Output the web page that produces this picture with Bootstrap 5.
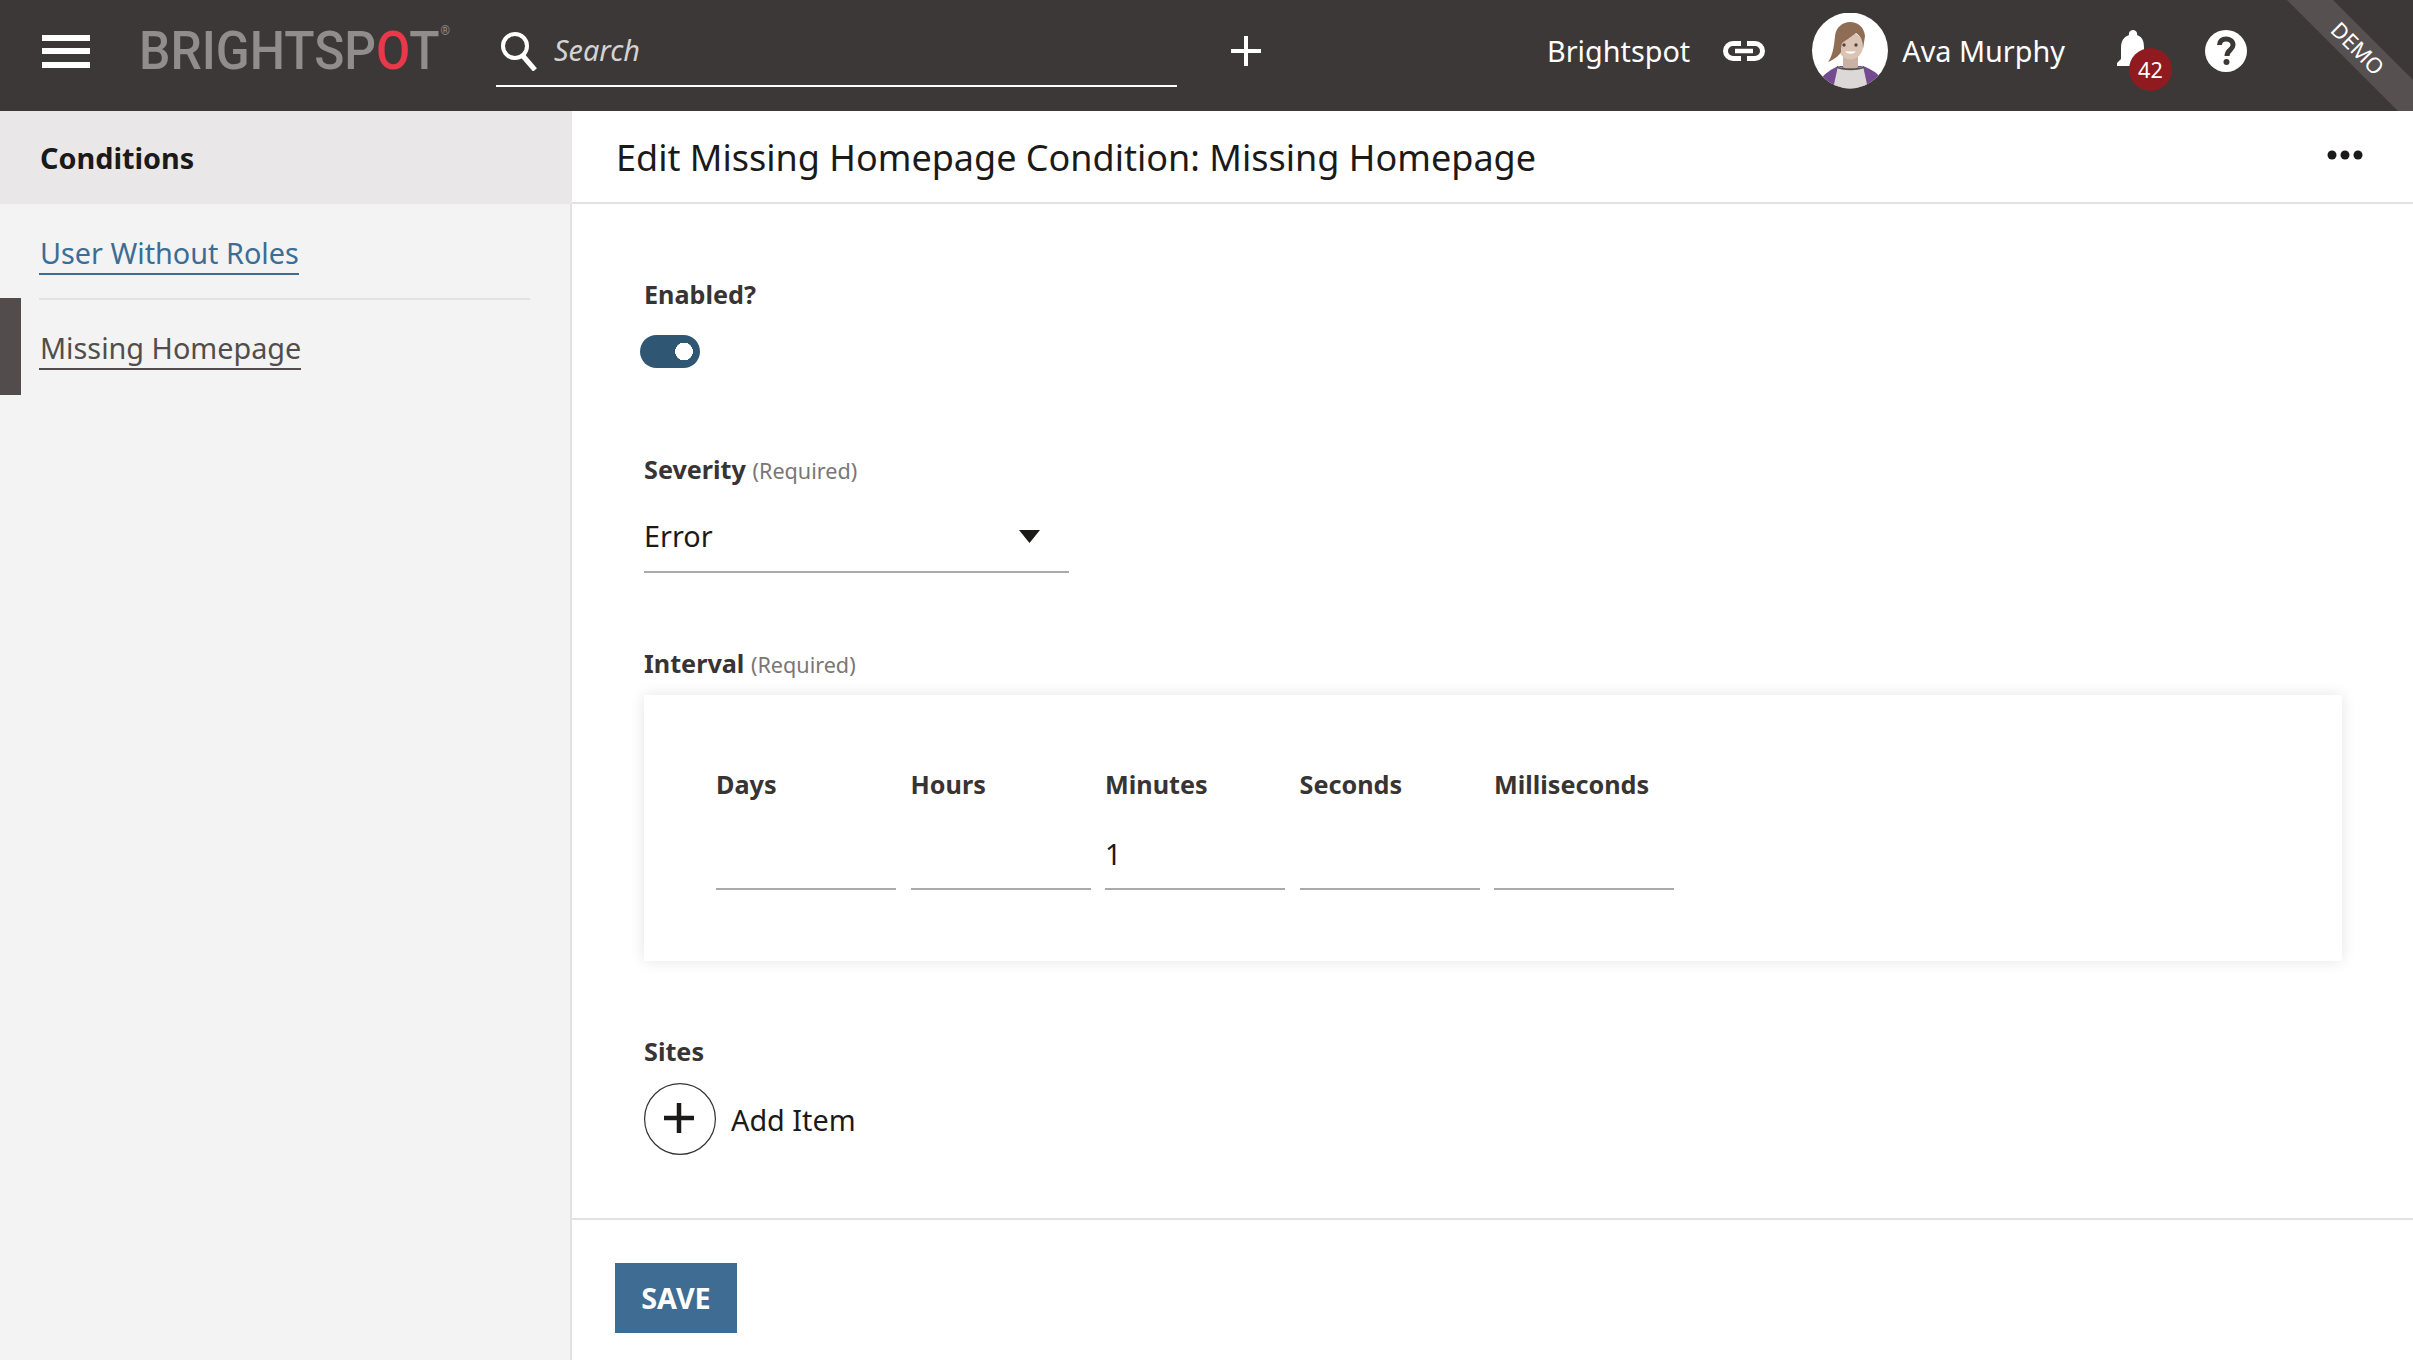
<!DOCTYPE html>
<html lang="en">
<head>
<meta charset="utf-8">
<title>Edit Missing Homepage Condition</title>
<link rel="stylesheet" href="https://cdn.jsdelivr.net/npm/bootstrap@5.3.0/dist/css/bootstrap.min.css">
<style>
html,body{height:100%;overflow:hidden}
body{font-family:"Noto Sans","Open Sans",sans-serif;font-size:28.8px;color:#1c1a19;background:#fff}
.bs-head{height:111px;background:#3c3837;color:#fff;position:relative;overflow:hidden;padding:0 0 9px 42px}
.bs-burger{width:48px;height:33px;display:flex;flex-direction:column;justify-content:space-between;margin-right:52px;flex:none}
.bs-burger i{display:block;height:6px;background:#fff}
.bs-logo{width:302px;flex:none;margin-right:55px;margin-left:-3px;padding-right:3px;font-family:Roboto,"Liberation Sans",sans-serif;font-weight:500;font-size:53.500px;line-height:1;color:#918d8c;white-space:nowrap}
.bs-logo-in{display:inline-block;transform:scaleX(.93);transform-origin:0 50%}
.bs-logo-in b{font-weight:500;color:#e8394a}
.bs-logo-in sup{font-size:13px;font-weight:400;top:-2.600em;vertical-align:baseline;margin-left:1px}
.bs-search{width:681px;height:87px;border-bottom:2px solid #fff;align-self:flex-start;padding:16px 0 0 4px;gap:16px;flex:none}
.bs-search span{font-style:italic;color:#d5d3d2;font-size:28.8px;line-height:1}
.bs-plus{margin-left:53px;width:32px;height:32px;flex:none}
.bs-space{margin-left:285px;line-height:1}
.bs-link{width:42px;height:20px;margin-left:33px;flex:none}
.bs-avatar{width:76px;height:76px;margin-left:47px;margin-right:14px;flex:none}
.bs-name{line-height:1}
.bs-bell{position:relative;width:46px;height:62px;margin-left:50px;flex:none;align-self:flex-start;margin-top:30px}
.bs-bell svg{width:32px;height:37px;display:block;margin-left:2px}
.bs-count{position:absolute;left:14px;top:18px;width:43px;height:43px;border-radius:50%;background:#8f1b20;color:#fff;font-size:21.600px;line-height:43px;text-align:center}
.bs-help{width:42px;height:42px;margin-left:44px;flex:none}
.bs-ribbon{position:absolute;right:0;top:0;width:126px;height:111px}
.bs-ribbon text{font-size:21.600px;fill:#fff;font-family:"Noto Sans",sans-serif}
.bs-shell{height:1249px}
.bs-side{width:572px;flex:none;background:#f3f3f3;border-right:2px solid #e2e2e2}
.bs-side-title{height:93px;background:#e9e7e8;padding-left:40px;font-weight:700;line-height:94px;margin-right:-2px}
.bs-side-item{position:relative;padding:0 40px 0 39px}
.bs-side-item a{display:inline-block;line-height:40px;text-decoration:none;border-bottom:2px solid currentColor;padding-left:1px}
.bs-item-one div{height:96px;border-bottom:2px solid #e2e2e2;padding-top:27px}
.bs-item-one a{color:#3d6d94}
.bs-item-two{padding-top:26px}
.bs-item-two a{color:#524d4c}
.bs-active{position:absolute;left:0;top:-2px;width:21px;height:97px;background:#524d4c}
.bs-title-row{height:93px;border-bottom:2px solid #e2e2e2;padding:2px 50px 0 44px}
.bs-title{font-size:36px;font-weight:400;margin:0;line-height:1;color:#1c1a19}
.bs-dots{width:36px;height:10px;margin-top:-5px}
.bs-form{padding-left:72px;padding-right:71px}
.bs-label{display:block;font-size:25.200px;font-weight:700;line-height:36px;color:#383433;margin:0}
.bs-label small{font-size:21.600px;font-weight:400;color:#7a7675;line-height:1}
.bs-enabled{margin-top:72px}
.form-switch .bs-toggle,.form-switch .bs-toggle:checked,.form-switch .bs-toggle:focus{display:block;width:60px;height:33px;margin:23px 0 0 -4px;float:none;border:0;border-radius:17px;background-color:#2f5673;background-image:radial-gradient(ellipse 9px 9px at 44px 50%,#fff 97%,transparent 100%);background-position:0 0;background-size:auto;box-shadow:none}
.bs-severity{margin-top:83px}
.bs-select,.bs-select:focus{width:425px;height:68px;margin-top:18px;padding:0 60px 4px 0;border:0;border-bottom:2px solid #aaa;border-radius:0;background-color:transparent;background-image:url("data:image/svg+xml,%3Csvg xmlns='http://www.w3.org/2000/svg' viewBox='0 0 21 13'%3E%3Cpath fill='%231c1a19' d='M0 0h21L10.500 13z'/%3E%3C/svg%3E");background-position:375px 25px;background-size:21px 13px;font-size:28.8px;color:#1c1a19;box-shadow:none}
.bs-interval{margin-top:72px}
.bs-panel{margin-top:14px;height:266px;padding:71px 0 0 72px;border:0;border-radius:0;box-shadow:0 0 14px rgba(0,0,0,.11)}
.bs-cols{gap:14.500px}
.bs-cols>div{width:180px}
.bs-num,.bs-num:focus{height:70px;margin-top:18px;padding:0 0 2px;border:0;border-bottom:2px solid #aaa;border-radius:0;background:transparent;font-size:28.8px;color:#1c1a19;box-shadow:none}
.bs-sites{margin-top:72px}
.bs-add{margin-top:14px;gap:15px}
.bs-circle{width:72px;height:72px;flex:none}
.bs-add span{line-height:1;padding-top:2px}
.bs-foot{margin-top:63px;border-top:2px solid #e2e2e2;padding:43px 0 0 43px}
.bs-save,.bs-save:hover{width:122px;height:70px;padding:0;background:#3e6c92;color:#fff;border:0;border-radius:0;font-size:28.8px;font-weight:700;line-height:70px}
</style>
</head>
<body>
<header class="bs-head d-flex align-items-center">
  <div class="bs-burger"><i></i><i></i><i></i></div>
  <div class="bs-logo"><span class="bs-logo-in">BRIGHTSP<b>O</b>T<sup>®</sup></span></div>
  <div class="bs-search d-flex align-items-center">
    <svg width="38" height="40" viewBox="0 0 38 40" fill="none" stroke="#fff"><circle cx="15" cy="15" r="12" stroke-width="4"/><path d="M23 25l12 14" stroke-width="5"/></svg>
    <span>Search</span>
  </div>
  <svg class="bs-plus" viewBox="0 0 32 32"><path d="M16 1v30M1 16h30" stroke="#fff" stroke-width="4"/></svg>
  <div class="bs-space">Brightspot</div>
  <svg class="bs-link" viewBox="0 0 42 20" fill="none" stroke="#fff" stroke-width="5"><path d="M18 2.500H10a7.500 7.500 0 0 0 0 15h8M24 2.500h8a7.500 7.500 0 0 1 0 15h-8"/><path d="M12 10h18" stroke-width="4.500"/></svg>
  <svg class="bs-avatar" viewBox="0 0 76 76">
    <defs><clipPath id="avc"><circle cx="38" cy="37.500" r="38"/></clipPath></defs>
    <g clip-path="url(#avc)">
      <rect width="76" height="76" fill="#fff"/>
      <path d="M9 66c4-6 11-10 17-13h25c5 2 12 5 16 10v13H9z" fill="#754b8f"/>
      <path d="M26 53c4 3 21 3 25 0l5 23H21z" fill="#dcd8d7"/>
      <path d="M31 43h15v11c-4 4-11 4-15 0z" fill="#c9b2a3"/>
      <path d="M25 54c5 3 22 3 27 0" fill="none" stroke="#575352" stroke-width="2"/>
      <ellipse cx="38.500" cy="33" rx="12.500" ry="13.500" fill="#dcc4b4"/>
      <path d="M16 49c4-5 6-14 7-26C24 14 31 9 38 9c8 0 14 5 15 14l-2 13c0-8-2-13-7-16-5 4-10 7-14 10-1 3-1 6-1 9-2 4-8 8-13 10z" fill="#8f6c54"/>
      <circle cx="32" cy="32" r="1.700" fill="#4d4744"/><circle cx="44" cy="32" r="1.700" fill="#4d4744"/>
      <path d="M33 38.500c3 3 8 3 11 0z" fill="#fff"/>
    </g>
  </svg>
  <div class="bs-name">Ava Murphy</div>
  <div class="bs-bell">
    <svg viewBox="0 0 32 37"><path d="M16 0a4 4 0 0 1 4 5c6 2 7 7 7 13v11l5 4v3H0v-3l4-4V18C4 12 6 7 12 5a4 4 0 0 1 4-5z" fill="#fff"/></svg>
    <span class="bs-count">42</span>
  </div>
  <svg class="bs-help" viewBox="0 0 42 42"><circle cx="21" cy="21" r="21" fill="#fff"/><path d="M14.500 15c0-4 3-6 6.500-6s7 2 7 6c0 5-6 5-6 11" fill="none" stroke="#3c3837" stroke-width="5"/><circle cx="21.500" cy="32" r="3" fill="#3c3837"/></svg>
  <svg class="bs-ribbon" viewBox="0 0 126 111"><path d="M0 0h46l80 80v31h-15z" fill="#565150"/><text x="70" y="56" text-anchor="middle" transform="rotate(45 70 49)">DEMO</text></svg>
</header>
<div class="bs-shell d-flex">
  <aside class="bs-side">
    <div class="bs-side-title">Conditions</div>
    <div class="bs-side-item bs-item-one"><div><a href="#">User Without Roles</a></div></div>
    <div class="bs-side-item bs-item-two"><span class="bs-active"></span><a href="#">Missing Homepage</a></div>
  </aside>
  <main class="flex-grow-1">
    <div class="bs-title-row d-flex align-items-center justify-content-between">
      <h1 class="bs-title">Edit Missing Homepage Condition: Missing Homepage</h1>
      <svg class="bs-dots" viewBox="0 0 36 10" fill="#1c1a19"><circle cx="5" cy="5" r="4.500"/><circle cx="18" cy="5" r="4.500"/><circle cx="31" cy="5" r="4.500"/></svg>
    </div>
    <form class="bs-form">
      <label class="bs-label bs-enabled" for="en">Enabled?</label>
      <div class="form-switch p-0"><input id="en" class="form-check-input bs-toggle" type="checkbox" role="switch" checked></div>
      <label class="bs-label bs-severity" for="sev">Severity <small>(Required)</small></label>
      <select id="sev" class="form-select bs-select"><option>Error</option></select>
      <label class="bs-label bs-interval">Interval <small>(Required)</small></label>
      <div class="card bs-panel">
        <div class="d-flex bs-cols">
          <div><label class="bs-label" for="d">Days</label><input id="d" class="form-control bs-num"></div>
          <div><label class="bs-label" for="h">Hours</label><input id="h" class="form-control bs-num"></div>
          <div><label class="bs-label" for="m">Minutes</label><input id="m" class="form-control bs-num" value="1"></div>
          <div><label class="bs-label" for="s">Seconds</label><input id="s" class="form-control bs-num"></div>
          <div><label class="bs-label" for="ms">Milliseconds</label><input id="ms" class="form-control bs-num"></div>
        </div>
      </div>
      <div class="bs-label bs-sites">Sites</div>
      <div class="d-flex align-items-center bs-add">
        <svg class="bs-circle" viewBox="0 0 72 72"><circle cx="36" cy="36" r="35.400" fill="none" stroke="#333" stroke-width="1.200"/><path d="M35 20v30M20 35h30" stroke="#1c1a19" stroke-width="4.500"/></svg>
        <span>Add Item</span>
      </div>
    </form>
    <div class="bs-foot"><button type="button" class="btn bs-save">SAVE</button></div>
  </main>
</div>
<script src="https://cdn.jsdelivr.net/npm/bootstrap@5.3.0/dist/js/bootstrap.bundle.min.js"></script>
</body>
</html>
